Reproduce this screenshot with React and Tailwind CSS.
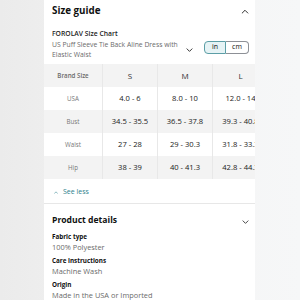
import React from "react";

function Chevron({ up, className }) {
    return (
        <svg viewBox="0 0 12 8" className={className} fill="none" stroke="currentColor" strokeWidth="1.6" strokeLinecap="round" strokeLinejoin="round">
            {up ? <path d="M1.5 6.5 L6 2 L10.5 6.5" /> : <path d="M1.5 1.5 L6 6 L10.5 1.5" />}
        </svg>
    );
}

const rows = [
    { label: "USA", values: ["4.0 - 6", "8.0 - 10", "12.0 - 14"] },
    { label: "Bust", values: ["34.5 - 35.5", "36.5 - 37.8", "39.3 - 40.8"] },
    { label: "Waist", values: ["27 - 28", "29 - 30.3", "31.8 - 33.3"] },
    { label: "Hip", values: ["38 - 39", "40 - 41.3", "42.8 - 44.3"] },
];

const details = [
    { title: "Fabric type", value: "100% Polyester" },
    { title: "Care instructions", value: "Machine Wash" },
    { title: "Origin", value: "Made in the USA or Imported" },
];

export default function App() {
    return (
        <div
            className="w-[300px] h-[300px] overflow-hidden flex bg-gradient-to-r from-[#ebebeb] via-[#f4f4f4] to-[#f6f7f8] text-[#0f1111]"
            style={{ fontFamily: '"Open Sans", "Noto Sans", sans-serif' }}
        >
            <div className="w-[44px] shrink-0" />
            <div className="w-[211px] shrink-0 bg-white overflow-hidden h-[300px]">
                {/* Size guide header */}
                <div className="h-[22px] flex items-center justify-between pl-[8px] pr-[6px]">
                    <h2 className="text-[9.8px] font-bold leading-none">Size guide</h2>
                    <Chevron up className="w-[8px] h-[5px] text-[#333]" />
                </div>

                {/* Chart selector */}
                <div className="pl-[8px] pr-[6px] pt-[7px] h-[42px]">
                    <div className="text-[6.8px] leading-[9px] font-semibold text-[#222]">FOROLAV Size Chart</div>
                    <div className="flex items-start mt-[2px]">
                        <div className="w-[128px] text-[6.8px] leading-[9.5px] text-[#6b6b6b]">
                            US Puff Sleeve Tie Back Aline Dress with Elastic Waist
                        </div>
                        <Chevron className="w-[7px] h-[4.5px] ml-[6px] mt-[8px] text-[#222]" />
                        <div className="ml-auto flex h-[13px] mt-[1px] text-[7px]">
                            <div className="w-[22px] flex items-center justify-center bg-[#e6f3f5] border border-[#5c9ea6] rounded-l-[4px] text-[#0f1111]">in</div>
                            <div className="w-[23px] flex items-center justify-center border border-l-0 border-[#8d9096] rounded-r-[4px] text-[#0f1111]">cm</div>
                        </div>
                    </div>
                </div>

                {/* Table */}
                <div className="w-[224px]">
                    <div className="flex h-[23px] items-center bg-[#f3f3f3]">
                        <div className="w-[59px] text-center text-[6.2px] text-[#6b6b6b] font-semibold border-r border-[#e8e8e8] h-full flex items-center justify-center">Brand Size</div>
                        {["S", "M", "L"].map((s, i) => (
                            <div key={s} className={`w-[55px] shrink-0 h-full flex items-center justify-center text-[8px] text-[#333] ${i < 2 ? "border-r border-[#e8e8e8]" : ""}`}>{s}</div>
                        ))}
                    </div>
                    {rows.map((row, r) => (
                        <div key={row.label} className={`flex h-[23px] ${r % 2 === 1 ? "bg-[#f3f3f3]" : "bg-white"}`}>
                            <div className="w-[59px] shrink-0 text-center text-[6.2px] text-[#777] border-r border-[#e8e8e8] flex items-center justify-center">{row.label}</div>
                            {row.values.map((v, i) => (
                                <div key={i} className={`w-[55px] shrink-0 flex items-center justify-center text-[7.6px] text-[#222] whitespace-nowrap ${i < 2 ? "border-r border-[#e8e8e8]" : ""}`}>{v}</div>
                            ))}
                        </div>
                    ))}
                </div>

                {/* See less */}
                <div className="h-[25px] pt-[2px] flex items-center pl-[10px] border-b border-[#e7e7e7] text-[#2a7f8c]">
                    <Chevron up className="w-[4px] h-[3px]" />
                    <span className="ml-[5px] text-[7px]">See less</span>
                </div>

                {/* Product details */}
                <div className="h-[24px] flex items-center justify-between pl-[8px] pr-[6px] mt-[4px]">
                    <h2 className="text-[8.6px] font-bold leading-none">Product details</h2>
                    <Chevron className="w-[7px] h-[4.5px] mt-[4px] text-[#333]" />
                </div>
                <div className="pl-[8px] flex flex-col gap-[4px] mt-[0px]">
                    {details.map((d) => (
                        <div key={d.title}>
                            <div className="text-[6.3px] leading-[10px] font-bold text-[#111]">{d.title}</div>
                            <div className="text-[7.4px] leading-[10px] text-[#6b6b6b]">{d.value}</div>
                        </div>
                    ))}
                </div>
            </div>
            <div className="flex-1" />
        </div>
    );
}
